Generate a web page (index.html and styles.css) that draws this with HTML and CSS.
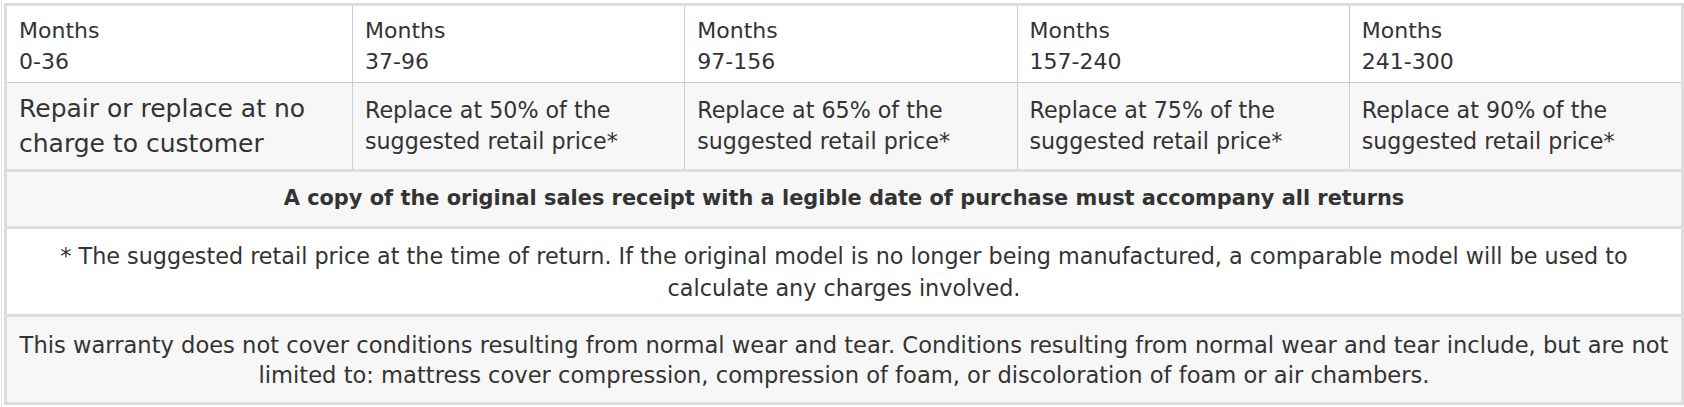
FILE: index.html
```html
<!DOCTYPE html>
<html lang="en">
<head>
<meta charset="utf-8">
<title>Warranty schedule</title>
<link rel="stylesheet" href="styles.css">
</head>
<body>
<div class="page">
  <div class="warranty">
    <div class="grid-row head">
      <div class="cell">Months<br>0-36</div>
      <div class="cell">Months<br>37-96</div>
      <div class="cell">Months<br>97-156</div>
      <div class="cell">Months<br>157-240</div>
      <div class="cell">Months<br>241-300</div>
    </div>
    <div class="grid-row terms">
      <div class="cell first">Repair or replace at no charge to customer</div>
      <div class="cell">Replace at 50% of the suggested retail price*</div>
      <div class="cell">Replace at 65% of the suggested retail price*</div>
      <div class="cell">Replace at 75% of the suggested retail price*</div>
      <div class="cell">Replace at 90% of the suggested retail price*</div>
    </div>
    <div class="wide receipt">A copy of the original sales receipt with a legible date of purchase must accompany all returns</div>
    <div class="wide note">* The suggested retail price at the time of return. If the original model is no longer being manufactured, a comparable model will be used to calculate any charges involved.</div>
    <div class="wide exclusions">This warranty does not cover conditions resulting from normal wear and tear. Conditions resulting from normal wear and tear include, but are not limited to: mattress cover compression, compression of foam, or discoloration of foam or air chambers.</div>
  </div>
</div>
</body>
</html>
```
FILE: styles.css
```css
html, body {
  margin: 0;
  padding: 0;
  background: #ffffff;
}

body {
  font-family: "DejaVu Sans", "Liberation Sans", sans-serif;
  color: #333333;
}

.page {
  margin-left: 1px;
  border-left: 1px solid #e3e3e3;
  padding: 3px 0 2px 2px;
  min-height: 402px;
  box-sizing: border-box;
}

.warranty {
  width: 1680px;
  box-sizing: border-box;
  border: 3px solid #dddddd;
}

.grid-row {
  display: grid;
  grid-template-columns: 345px repeat(4, 1fr);
}

.cell {
  padding: 7px 12px;
  display: flex;
  flex-direction: column;
  justify-content: center;
}

.cell + .cell {
  border-left: 1px solid #cccccc;
}

.head {
  background: #ffffff;
  border-bottom: 1px solid #cccccc;
  font-size: 22px;
  line-height: 31px;
}

.head .cell {
  display: block;
  padding: 9px 12px 5px;
}

.terms {
  background: #f7f7f7;
  font-size: 22.2px;
  line-height: 31px;
}

.terms .cell {
  padding: 8px 12px;
}

.terms .first {
  font-size: 25px;
  line-height: 35px;
}

.wide {
  border-top: 3px solid #dddddd;
  text-align: center;
  padding: 0 6px;
}

.receipt {
  background: #f7f7f7;
  font-weight: bold;
  font-size: 20.9px;
  line-height: 31px;
  padding-top: 11px;
  padding-bottom: 12px;
}

.note {
  background: #ffffff;
  font-size: 22.3px;
  line-height: 32px;
  padding-top: 11px;
  padding-bottom: 10px;
}

.exclusions {
  background: #f7f7f7;
  font-size: 22.6px;
  line-height: 30px;
  padding-top: 13px;
  padding-bottom: 12px;
}
```
